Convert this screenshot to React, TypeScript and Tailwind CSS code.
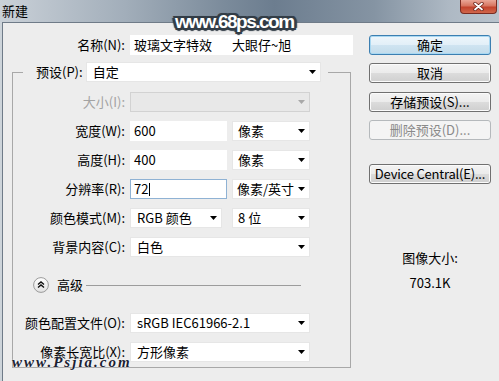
import React from 'react';

function Arrow({ disabled }: { disabled?: boolean }) {
  return (
    <svg width="7" height="4" viewBox="0 0 7 4" className="shrink-0">
      <polygon points="0,0 7,0 3.5,4" fill={disabled ? '#a8a8a8' : '#000'} />
    </svg>
  );
}

function Select({ w, text, disabled, pl = 'pl-[6px]' }: { w: string; text?: string; disabled?: boolean; pl?: string }) {
  return (
    <div
      className={`${w} flex h-[20px] items-center justify-between ${pl} pr-[4px] ${
        disabled ? 'border border-[#d2d2d2] bg-[#e8e8e8]' : 'border border-[#e6e6e6] bg-white'
      }`}
    >
      <span className="whitespace-pre">{text}</span>
      <Arrow disabled={disabled} />
    </div>
  );
}

function Row({ label, disabled, children }: { label: string; disabled?: boolean; children: React.ReactNode }) {
  return (
    <div className="flex h-[20px] items-center gap-[5px]">
      <div className={`w-[112px] text-right ${disabled ? 'text-[#a3a3a3]' : ''}`}>{label}</div>
      {children}
    </div>
  );
}

function Btn({ children, kind, mt }: { children: React.ReactNode; kind?: 'default' | 'disabled'; mt: string }) {
  const base = 'flex h-[20px] w-[122px] items-center justify-center rounded-[3px] border';
  let cls = 'border-[#707070] bg-[linear-gradient(to_bottom,#f3f3f3_0%,#ebebeb_50%,#dcdcdc_51%,#cfcfcf_100%)] shadow-[inset_0_0_0_1px_#fbfbfb]';
  if (kind === 'default')
    cls = 'border-[#3c7fb1] bg-[linear-gradient(to_bottom,#eef6fb_0%,#e2eff8_50%,#cfe4f1_51%,#c3dceb_100%)] shadow-[inset_0_0_0_1px_#a9d8f2]';
  if (kind === 'disabled') cls = 'border-[#b5b9bc] bg-[#f4f4f4] text-[#8a8a8a]';
  return <div className={`${base} ${cls} ${mt}`}>{children}</div>;
}

export default function App() {
  return (
    <div className="relative flex h-[381px] w-[499px] flex-col overflow-hidden bg-[#cdd4da] font-['Noto_Sans_CJK_SC',sans-serif] text-[13px] leading-[20px] text-black">
      {/* title bar */}
      <div className="flex h-[22px] items-start bg-[linear-gradient(to_right,#cad1d8_0%,#a2aeba_25%,#7b8b9b_45%,#6c7d8f_55%,#8594a3_75%,#aeb9c4_90%,#b9c3cd_100%)]">
        <div className="flex h-[21px] items-center pl-[2px] text-[13px]">新建</div>
        <div className="ml-auto mr-[2px] flex h-[14px] w-[37px] items-center justify-center rounded-b-[4px] border border-t-0 border-[#7a2c22] bg-[linear-gradient(to_bottom,#eaa797_0%,#d77560_45%,#c3432c_55%,#d0674c_100%)]">
          <svg width="11" height="9" viewBox="0 0 11 9">
            <path d="M2 1.5 L9 7.5 M9 1.5 L2 7.5" stroke="#6a1f15" strokeWidth="3.4" strokeLinecap="round" />
            <path d="M2 1.5 L9 7.5 M9 1.5 L2 7.5" stroke="#ffffff" strokeWidth="1.8" strokeLinecap="round" />
          </svg>
        </div>
      </div>

      {/* body */}
      <div className="ml-[2px] flex flex-1 border-l border-t border-[#6f7b88] bg-[#ededed]">
        {/* left column */}
        <div className="flex w-[350px] flex-col pt-[12px]">
          <div className="flex h-[20px] items-center gap-[5px]">
            <div className="w-[122px] text-right">名称(N):</div>
            <div className="flex h-[20px] w-[223px] items-center whitespace-pre bg-white pl-[4px]">
              玻璃文字特效<span className="ml-[20px]">大眼仔~旭</span>
            </div>
          </div>

          <fieldset className="ml-[9px] mt-[7px] w-[339px] border border-[#a8a8a8] pb-[5px]">
            <legend className="ml-[10px]">
              <div className="flex items-center gap-[3px] pl-[13px] pr-[7px]">
                <span>预设(P):</span>
                <Select w="w-[235px]" text="自定" />
              </div>
            </legend>

            <div className="flex flex-col gap-[9px] pt-[10px]">
              <Row label="大小(I):" disabled>
                <Select w="w-[180px]" disabled />
              </Row>
              <Row label="宽度(W):">
                <div className="flex h-[20px] w-[97px] items-center bg-white pl-[4px]">600</div>
                <Select w="w-[78px]" text="像素" pl="pl-[5px]" />
              </Row>
              <Row label="高度(H):">
                <div className="flex h-[20px] w-[97px] items-center bg-white pl-[4px]">400</div>
                <Select w="w-[78px]" text="像素" pl="pl-[5px]" />
              </Row>
              <Row label="分辨率(R):">
                <div className="flex h-[20px] w-[97px] items-center border border-[#8fb2d4] bg-white pl-[3px]">
                  72
                  <span className="ml-[1px] inline-block h-[13px] w-px bg-black" />
                </div>
                <Select w="w-[78px]" text="像素/英寸" pl="pl-[4px]" />
              </Row>
              <Row label="颜色模式(M):">
                <Select w="w-[92px]" text="RGB 颜色" />
                <div className="w-0" />
                <Select w="w-[78px]" text="8 位" pl="pl-[5px]" />
              </Row>
              <Row label="背景内容(C):">
                <Select w="w-[180px]" text="白色" />
              </Row>
            </div>

            <div className="mt-[18px] flex h-[20px] items-center">
              <svg width="16" height="16" viewBox="0 0 16 16" className="ml-[20px]">
                <defs>
                  <linearGradient id="cg" x1="0" y1="0" x2="0" y2="1">
                    <stop offset="0" stopColor="#ffffff" />
                    <stop offset="1" stopColor="#e2e2e2" />
                  </linearGradient>
                </defs>
                <circle cx="8" cy="8" r="7.4" fill="url(#cg)" stroke="#9a9a9a" strokeWidth="1" />
                <path d="M5 7.5 L8 5 L11 7.5 M5 10.5 L8 8 L11 10.5" fill="none" stroke="#111" strokeWidth="1.4" />
              </svg>
              <span className="ml-[8px]">高级</span>
              <div className="ml-[3px] h-px w-[215px] bg-[#9c9c9c]" />
            </div>

            <div className="mt-[18px] flex flex-col gap-[9px]">
              <Row label="颜色配置文件(O):">
                <Select w="w-[180px]" text="sRGB IEC61966-2.1" />
              </Row>
              <Row label="像素长宽比(X):">
                <Select w="w-[180px]" text="方形像素" />
              </Row>
            </div>
          </fieldset>
        </div>

        {/* right column */}
        <div className="ml-[16px] flex w-[122px] flex-col pt-[12px]">
          <Btn kind="default" mt="mt-0">确定</Btn>
          <Btn mt="mt-[8px]">取消</Btn>
          <Btn mt="mt-[9px]">存储预设(S)...</Btn>
          <Btn kind="disabled" mt="mt-[8px]">删除预设(D)...</Btn>
          <Btn mt="mt-[24px]"><span className="tracking-[-0.2px]">Device Central(E)...</span></Btn>
          <div className="mt-[66px] text-center leading-[16px]">图像大小:</div>
          <div className="mt-[9px] text-center leading-[16px]">703.1K</div>
        </div>
      </div>

      {/* watermarks */}
      <div className="absolute left-[175px] top-[11px] font-['Liberation_Sans',Arial,sans-serif] text-[19px] font-bold leading-[22px] tracking-[-1.5px] text-white [text-shadow:0_0_3px_#2f3a44,1px_1px_0_#343e48,-1px_-1px_0_#343e48,1px_-1px_0_#343e48,-1px_1px_0_#343e48,2px_0_0_#343e48,-2px_0_0_#343e48,0_2px_0_#343e48,0_-2px_0_#343e48,2px_2px_0_#343e48,-2px_2px_0_#343e48,2px_-2px_0_#343e48,-2px_-2px_0_#343e48,3px_0_1px_#343e48,-3px_0_1px_#343e48,0_3px_1px_#343e48]">
        www.68ps.com
      </div>
      <div className="absolute left-[12px] top-[354px] font-['Liberation_Serif',serif] text-[15px] font-bold italic leading-[16px] tracking-[2px] text-[#1b2233] [text-shadow:0_0_2px_#ffffff]">
        www.Psjia.com
      </div>
    </div>
  );
}
